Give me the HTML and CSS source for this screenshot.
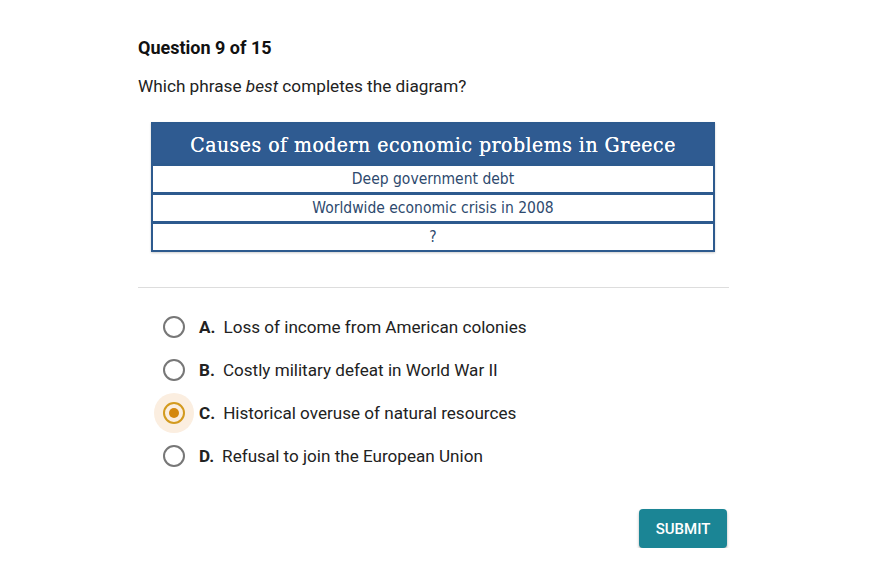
FILE: index.html
```html
<!DOCTYPE html>
<html lang="en">
<head>
    <meta charset="UTF-8">
    <title>Question 9 of 15</title>
    <link rel="stylesheet" href="styles.css">
</head>
<body>
    <div class="quiz">
        <h2 class="q-title">Question 9 of 15</h2>
        <p class="q-prompt">Which phrase <em>best</em> completes the diagram?</p>

        <div class="diagram">
            <div class="diagram-head">Causes of modern economic problems in Greece</div>
            <div class="diagram-row">Deep government debt</div>
            <div class="diagram-row">Worldwide economic crisis in 2008</div>
            <div class="diagram-row">?</div>
        </div>

        <hr class="divider">

        <ul class="options">
            <li class="option">
                <span class="radio"></span>
                <span class="letter">A.</span>
                <span class="answer">Loss of income from American colonies</span>
            </li>
            <li class="option">
                <span class="radio"></span>
                <span class="letter">B.</span>
                <span class="answer">Costly military defeat in World War II</span>
            </li>
            <li class="option selected">
                <span class="radio"></span>
                <span class="letter">C.</span>
                <span class="answer">Historical overuse of natural resources</span>
            </li>
            <li class="option">
                <span class="radio"></span>
                <span class="letter">D.</span>
                <span class="answer">Refusal to join the European Union</span>
            </li>
        </ul>

        <div class="actions">
            <button class="submit">SUBMIT</button>
        </div>
    </div>
</body>
</html>
```

FILE: styles.css
```css
body {
    margin: 0;
    background-color: #fff;
    font-family: Roboto, "Liberation Sans", sans-serif;
    color: #222;
}
.quiz {
    width: 591px;
    margin-left: 138px;
    padding-top: 37px;
}
.q-title {
    margin: 0;
    font-size: 18px;
    font-weight: 700;
    color: #111;
    line-height: 22px;
}
.q-prompt {
    margin: 16px 0 0;
    font-size: 17.2px;
    line-height: 22px;
    color: #222;
}
.diagram {
    width: 560px;
    margin: 25px 0 0 13px;
    border: 2px solid #2d5a8e;
    box-shadow: 0 1px 2px rgba(0,0,0,0.2);
}
.diagram-head {
    background-color: #2f5b91;
    color: #fff;
    text-align: center;
    font-family: "DejaVu Serif Condensed", "DejaVu Serif", serif;
    font-size: 21px;
    height: 39px;
    line-height: 42px;
    letter-spacing: 0.5px;
    text-shadow: 0 0 0.4px #fff;
}
.diagram-row {
    border-top: 3px solid #2d5a8e;
    height: 26px;
    line-height: 26px;
    text-align: center;
    font-family: "DejaVu Sans Condensed", "DejaVu Sans", sans-serif;
    font-size: 15.5px;
    color: #2e4a6e;
}
.divider {
    border: none;
    border-top: 1px solid #ddd;
    margin: 35px 0 0;
}
.options {
    list-style: none;
    margin: 18px 0 0;
    padding: 0 0 0 25px;
}
.option {
    display: flex;
    align-items: center;
    height: 43px;
    font-size: 17.1px;
}
.option:first-child {
    margin-top: -1px;
}
.radio {
    position: relative;
    width: 18px;
    height: 18px;
    border: 2px solid #777;
    border-radius: 50%;
    box-sizing: content-box;
    flex-shrink: 0;
    margin-right: 14px;
}
.option.selected .radio {
    border-color: #d39a1e;
}
.option.selected .radio::before {
    content: "";
    position: absolute;
    left: -11px;
    top: -11px;
    width: 40px;
    height: 40px;
    border-radius: 50%;
    background-color: #fbeee0;
    z-index: -1;
}
.option.selected .radio::after {
    content: "";
    position: absolute;
    left: 4px;
    top: 4px;
    width: 10px;
    height: 10px;
    border-radius: 50%;
    background-color: #d4880f;
}
.letter {
    font-weight: 700;
    margin-right: 8px;
    color: #222;
}
.answer {
    color: #222;
}
.actions {
    display: flex;
    justify-content: flex-end;
    margin-top: 32px;
    padding-right: 2px;
}
.submit {
    background-color: #1b8595;
    color: #fff;
    border: none;
    border-radius: 4px;
    width: 88px;
    height: 39px;
    font-family: Roboto, "Liberation Sans", sans-serif;
    font-size: 15px;
    font-weight: 500;
    box-shadow: 0 2px 3px rgba(0,0,0,0.3);
    cursor: pointer;
}
```
